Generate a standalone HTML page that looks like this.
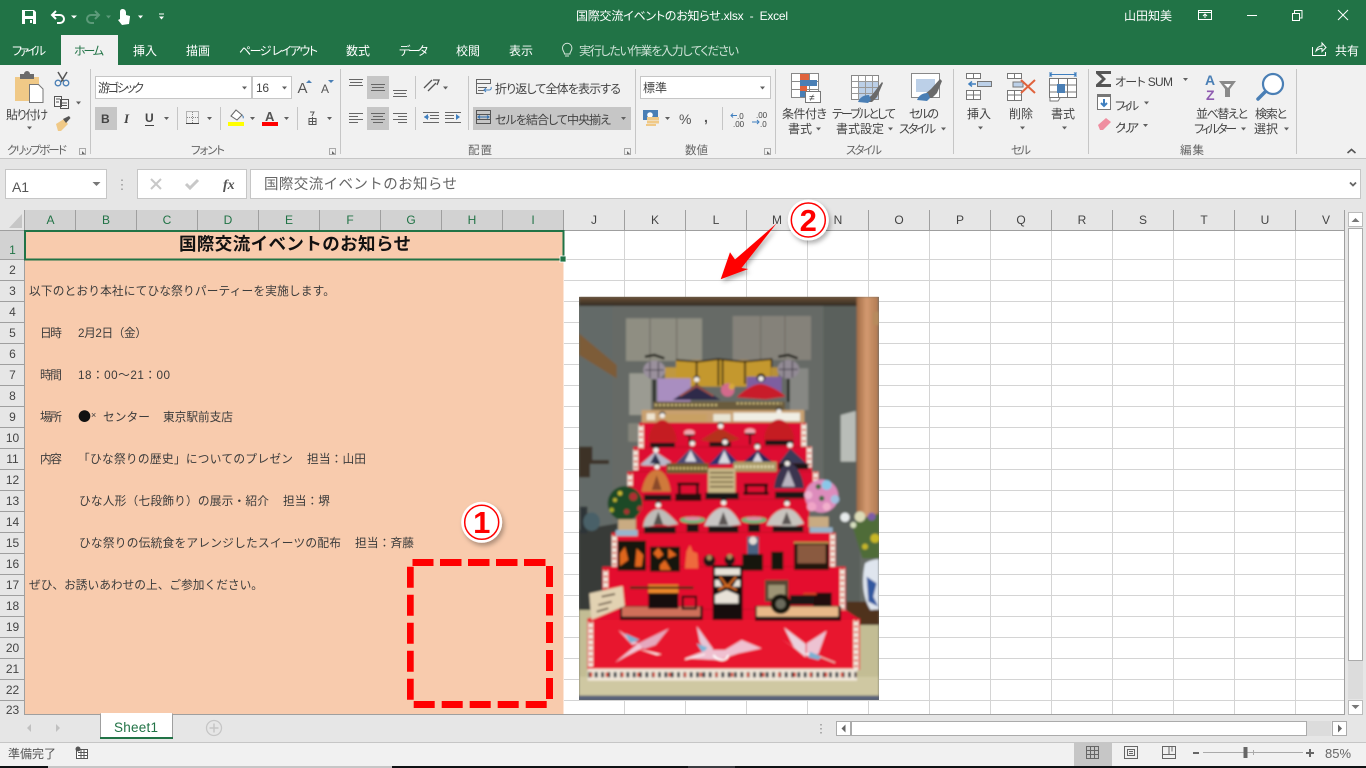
<!DOCTYPE html>
<html lang="ja"><head><meta charset="utf-8"><title>国際交流イベントのお知らせ.xlsx - Excel</title>
<style>
html,body{margin:0;padding:0;width:1366px;height:768px;overflow:hidden;background:#e6e6e6}
svg{display:block;position:absolute;left:0;top:0}
text{font-family:"Liberation Sans","Noto Sans CJK JP",sans-serif;white-space:pre}
.r{font-size:12px;fill:#444;font-feature-settings:"palt"}
.w{font-size:12px;fill:#fff;font-feature-settings:"palt"}
.l{font-size:11.5px;fill:#666;font-feature-settings:"palt"}
.c{font-size:11.7px;fill:#3c3c3c}
.h{font-size:12px;fill:#444;text-anchor:middle}
.g{fill:#217346;font-feature-settings:"palt"}
.tri{fill:#606060}
.sep{stroke:#c6c6c6;stroke-width:1}
</style></head><body>
<svg width="1366" height="768" viewBox="0 0 1366 768" xmlns="http://www.w3.org/2000/svg">
<defs>
<filter id="sh" x="-30%" y="-30%" width="170%" height="170%"><feDropShadow dx="2" dy="3" stdDeviation="2.5" flood-color="#000" flood-opacity=".3"/></filter>
<filter id="bl" x="-5%" y="-5%" width="110%" height="110%"><feGaussianBlur stdDeviation="3.2"/></filter>
<clipPath id="pc"><rect x="27" y="20" width="900" height="1210"/></clipPath>
<linearGradient id="wood" x1="0" x2="1" y1="0" y2="0"><stop offset="0" stop-color="#a06a44"/><stop offset=".45" stop-color="#d39a70"/><stop offset="1" stop-color="#b27a52"/></linearGradient>
<linearGradient id="ceil" x1="0" x2="0" y1="0" y2="1"><stop offset="0" stop-color="#6e5238"/><stop offset="1" stop-color="#2f2a22"/></linearGradient>
<g id="hd"><circle r="8" cy="2" fill="#f3eee8"/><path d="M-10 0a10 10 0 0 1 20 0l-2 1a8 6 0 0 0-16 0z" fill="#111"/></g>
</defs>

<!-- title bar -->
<rect width="1366" height="65" fill="#217346"/>
<path d="M22 10h12l2 2v12H22z" fill="#fff"/><path d="M25 11h8v5h-8z" fill="#217346"/><path d="M25 19h8v5h-8z" fill="#217346"/><path d="M30 20h2v3h-2z" fill="#fff"/>
<path d="M56 11l-4 4 4 4M52 15h8a4 4 0 0 1 0 8h-3" fill="none" stroke="#fff" stroke-width="2"/>
<path d="M71 15.500h6l-3 3z" fill="#fff"/>
<path d="M95 11l4 4-4 4M99 15h-8a4 4 0 0 0 0 8h3" fill="none" stroke="#5c9a79" stroke-width="2"/>
<path d="M106 15.500h5l-2.500 3z" fill="#5c9a79"/>
<path d="M122 9a3.500 3.500 0 0 1 4 3v3l4 1v1l-1 7-7 1-4-5 2-1V12a3 3 0 0 1 2-3z" fill="#fff"/>
<path d="M138 15.500h5l-2.500 3z" fill="#fff"/>
<path d="M159 13.500h5v1h-5zM159 16.500h5l-2.500 3z" fill="#fff"/>
<text class="w" x="576" y="20" textLength="212">国際交流イベントのお知らせ.xlsx  -  Excel</text>
<text class="w" x="1124" y="20" textLength="48">山田知美</text>
<path d="M1198.500 10.500h13v9h-13zM1198.500 12.500h13M1205 18v-4M1203 16l2-2 2 2" fill="none" stroke="#fff"/>
<path d="M1247 15.500h10" stroke="#fff"/>
<path d="M1292.500 13.500h7v7h-7zM1294.500 13v-2.500h7.500v7.500h-2.500" fill="none" stroke="#fff"/>
<path d="M1338 10l10 10M1348 10l-10 10" stroke="#fff" fill="none"/>
<rect x="61" y="35" width="57" height="30" fill="#f1f1f1"/>
<text class="w" x="12" y="55" textLength="34">ファイル</text>
<text class="g" font-size="12" x="74" y="55" textLength="30">ホーム</text>
<text class="w" x="133" y="55" textLength="24">挿入</text>
<text class="w" x="186" y="55" textLength="24">描画</text>
<text class="w" x="239" y="55" textLength="79">ページ レイアウト</text>
<text class="w" x="346" y="55" textLength="24">数式</text>
<text class="w" x="399" y="55" textLength="29">データ</text>
<text class="w" x="456" y="55" textLength="24">校閲</text>
<text class="w" x="509" y="55" textLength="24">表示</text>
<path d="M564.500 54c0-2-2-3-2-6a4.700 4.700 0 0 1 9.400 0c0 3-2 4-2 6zM565 56h4" fill="none" stroke="#d5e5db"/>
<text x="579" y="55" font-size="12" fill="#cfe2d7" style="font-feature-settings:'palt'" textLength="160">実行したい作業を入力してください</text>
<path d="M1312.500 47v8.500h13V52M1316 51c1-4 4-5 6-5v-3l4 4.500-4 4v-3c-2 0-4 .5-6 2.500z" fill="none" stroke="#fff"/>
<text class="w" x="1335" y="55" textLength="24">共有</text>

<!-- ribbon -->
<rect y="65" width="1366" height="93" fill="#f1f1f1"/>
<rect y="158" width="1366" height="1" fill="#c6c6c6"/>
<g class="sep">
<path d="M90.500 69v85M340.500 69v85M635.500 69v85M775.500 69v85M953.500 69v85M1088.500 69v85M1296.500 69v85M177.500 107v23M220.500 107v23M297.500 107v23M415.500 76v23M415.500 107v23M468.500 76v54M722.500 107v23"/>
</g>

<!-- clipboard -->
<path d="M15 77h24v24H15z" fill="#f0c987"/><path d="M20 74h4a3 3 0 0 1 6 0h4v5H20z" fill="#6b6b6b"/>
<path d="M29.500 84.500h9l4.500 4.500v13.500H29.500z" fill="#fff" stroke="#777"/>
<text class="r" x="6" y="119" textLength="42">貼り付け</text>
<path class="tri" d="M27 126.500h5l-2.500 3z"/>
<path d="M58 72l6 10M67 72l-6 10" stroke="#555" stroke-width="1.500" fill="none"/><circle cx="58" cy="83" r="2.800" fill="none" stroke="#4a7fb5" stroke-width="1.300"/><circle cx="66" cy="83" r="2.800" fill="none" stroke="#4a7fb5" stroke-width="1.300"/>
<path d="M54.500 96.500h7v10h-7zM60.500 99.500h8v9h-8zM56 99h4M56 102h3M62 103h5M62 105.500h5" fill="#f8f8f8" stroke="#555"/>
<path class="tri" d="M76 101.500h5l-2.500 3z"/>
<path d="M56 124l8-5 4 5-7 7-3 0z" fill="#f0c987"/><path d="M63 119l6-3 1.500 2-4.500 5z" fill="#555"/>
<text class="l" x="7" y="154" textLength="60">クリップボード</text>
<path d="M79.500 148.500h6v6h-6z" fill="none" stroke="#aaa"/><path d="M82 151l3 3h-3z" fill="#666"/>

<!-- font -->
<rect x="95.500" y="76.500" width="156" height="22" fill="#fff" stroke="#c6c6c6"/>
<rect x="252.500" y="76.500" width="39" height="22" fill="#fff" stroke="#c6c6c6"/>
<text class="r" x="98" y="92" textLength="46">游ゴシック</text>
<path class="tri" d="M242 86.500h5l-2.500 3z"/>
<text class="r" x="256" y="92" textLength="13">16</text>
<path class="tri" d="M282 86.500h5l-2.500 3z"/>
<text x="297.500" y="93" font-size="15" fill="#555">A</text><path d="M306 83h6l-3-3z" fill="#4a7fb5"/>
<text x="321" y="93" font-size="12" fill="#555">A</text><path d="M328 80h6l-3 3z" fill="#4a7fb5"/>
<rect x="95" y="107" width="22" height="23" fill="#c6c6c6"/>
<text x="101" y="123" font-size="12" font-weight="bold" fill="#444">B</text>
<text x="124" y="123" font-size="13" font-style="italic" style="font-family:'Liberation Serif',serif" font-weight="bold" fill="#444">I</text>
<text x="145" y="122" font-size="12" font-weight="bold" fill="#444">U</text><path d="M145 125.500h9" stroke="#444"/>
<path class="tri" d="M164 117h5l-2.500 3z"/>
<path d="M186.500 111.500h12v12h-12z" fill="none" stroke="#777" stroke-dasharray="1 1"/><path d="M186 123.500h13" stroke="#444"/><path d="M192.500 112v11M187 117.500h11" stroke="#888" stroke-dasharray="1 1"/>
<path class="tri" d="M207 117h5l-2.500 3z"/>
<path d="M231 116l5-6 6 5-5 5z" fill="#fff" stroke="#666"/><path d="M242 114l2 3-1 2z" fill="#4a7fb5"/><rect x="228" y="122" width="16" height="4" fill="#ff0"/>
<path class="tri" d="M250 117h5l-2.500 3z"/>
<text x="265" y="121" font-size="13" font-weight="bold" fill="#555">A</text><rect x="262" y="122" width="16" height="4" fill="#f00"/>
<path class="tri" d="M284 117h5l-2.500 3z"/>
<path d="M310 112h4l-2 4M309 118.500h7v6h-7zM312.500 117v8M309 121.500h7" fill="none" stroke="#555"/>
<path class="tri" d="M327 117h5l-2.500 3z"/>
<text class="l" x="191" y="154" textLength="34">フォント</text>
<path d="M329.500 148.500h6v6h-6z" fill="none" stroke="#aaa"/><path d="M332 151l3 3h-3z" fill="#666"/>

<!-- alignment -->
<rect x="367" y="76" width="22" height="23" fill="#c6c6c6"/><rect x="367" y="107" width="22" height="23" fill="#c6c6c6"/>
<path d="M349 79.500h14M350 82.500h12M349 85.500h14M371 84.500h14M372 87.500h12M371 90.500h14M393 90.500h14M394 93.500h12M393 96.500h14" stroke="#666" fill="none"/>
<path d="M349 113.500h14M349 116.500h9M349 119.500h14M349 122.500h9M371 113.500h14M373 116.500h10M371 119.500h14M373 122.500h10M393 113.500h14M398 116.500h9M393 119.500h14M398 122.500h9" stroke="#666" fill="none"/>
<path d="M424 88l8-8M428 91l8-8M433 80l6 0-2 5" stroke="#555" fill="none" stroke-width="1.300"/>
<path class="tri" d="M443 86.500h5l-2.500 3z"/>
<path d="M423 112.500h16M430 115.500h9M430 118.500h9M423 122.500h16" stroke="#666"/><path d="M428 114l-4 3 4 3z" fill="#3f7fbf"/><path d="M424 117h5" stroke="#3f7fbf"/>
<path d="M445 112.500h16M445 115.500h9M445 118.500h9M445 122.500h16" stroke="#666" /><path d="M456 114l4 3-4 3z" fill="#3f7fbf"/>
<path d="M476.500 79.500h14v4h-14zM478 87.500h9M478 90.500h6M476.500 84v9.500h7" fill="none" stroke="#666"/><path d="M486 92l-2-2 2-2M484 90h5a2 2 0 0 0 2-3" fill="none" stroke="#3f7fbf"/>
<text class="r" x="495" y="93" textLength="126">折り返して全体を表示する</text>
<rect x="473" y="107" width="158" height="23" fill="#c6c6c6"/>
<path d="M476.500 110.500h14v13h-14zM476.500 114.500h14M476.500 119.500h14" fill="none" stroke="#555"/><path d="M479 117h9M480 115.500l-2 1.500 2 1.500M487 115.500l2 1.500-2 1.500" fill="none" stroke="#2f6fb0"/>
<text class="r" x="495" y="124" textLength="116">セルを結合して中央揃え</text>
<path class="tri" d="M621 117h5l-2.500 3z"/>
<text class="l" x="468" y="154" textLength="24">配置</text>
<path d="M624.500 148.500h6v6h-6z" fill="none" stroke="#aaa"/><path d="M627 151l3 3h-3z" fill="#666"/>

<!-- number -->
<rect x="640.500" y="76.500" width="130" height="22" fill="#fff" stroke="#c6c6c6"/>
<text class="r" x="643" y="92" textLength="24">標準</text>
<path class="tri" d="M760 86.500h5l-2.500 3z"/>
<rect x="643" y="110" width="15" height="10" fill="#4a7fb5"/><circle cx="650" cy="115" r="2.800" fill="#fff"/>
<rect x="647" y="117" width="12" height="3" fill="#f0c987"/><rect x="647" y="120.500" width="12" height="3" fill="#f0c987"/><rect x="646" y="124" width="10" height="2" fill="#f0c987"/>
<path class="tri" d="M665 117h5l-2.500 3z"/>
<text x="679" y="124" font-size="14" fill="#555">%</text>
<text x="704" y="122" font-size="14" font-weight="bold" fill="#555">,</text>
<text x="737" y="119" font-size="8" fill="#444">.0</text><text x="733" y="127" font-size="8" fill="#444">.00</text><path d="M731 115.500h6M733 113.500l-2 2 2 2" stroke="#3f7fbf" fill="none"/>
<text x="756" y="118" font-size="8" fill="#444">.00</text><text x="760" y="127" font-size="8" fill="#444">.0</text><path d="M752 122h7M757 120l2 2-2 2" stroke="#3f7fbf" fill="none"/>
<text class="l" x="685" y="154" textLength="23">数値</text>
<path d="M764.500 148.500h6v6h-6z" fill="none" stroke="#aaa"/><path d="M767 151l3 3h-3z" fill="#666"/>

<!-- styles -->
<path d="M791.500 73.500h27v24h-27zM791.500 81.500h27M791.500 89.500h27M800.500 73.500v24M809.500 73.500v24" fill="#fff" stroke="#888"/>
<rect x="800" y="74" width="9" height="7" fill="#e0633d"/><rect x="800" y="80" width="17" height="6" fill="#4a7fb5"/><rect x="800" y="86" width="7" height="5" fill="#e0633d"/><rect x="800" y="91" width="5" height="6" fill="#4a7fb5"/>
<rect x="805.500" y="91.500" width="15" height="11" fill="#fff" stroke="#777"/><text x="809" y="101" font-size="10" fill="#444">≠</text>
<text class="r" x="782" y="118" textLength="45">条件付き</text>
<text class="r" x="788" y="133" textLength="24">書式</text><path class="tri" d="M816 127.500h5l-2.500 3z"/>
<path d="M851.500 75.500h27v24h-27z" fill="#fff" stroke="#888"/><rect x="859" y="81" width="19" height="18" fill="#bcd0e8"/>
<path d="M851.500 81.500h27M851.500 87.500h27M851.500 93.500h27M858.500 75.500v24M865.500 75.500v24M872.500 75.500v24" stroke="#999" fill="none"/>
<path d="M866 100l6-5 10-13 1 1-6 14-5 5h-7z" fill="#6a6a6a"/><path d="M858 102c2-5 6-7 11-7l2 5-3 3z" fill="#4a7fb5"/>
<text class="r" x="832" y="118" textLength="64">テーブルとして</text>
<text class="r" x="836" y="133" textLength="48">書式設定</text><path class="tri" d="M888 127.500h5l-2.500 3z"/>
<path d="M911.500 73.500h28v24h-28z" fill="#fff" stroke="#888"/><rect x="916" y="79" width="19" height="13" fill="#bcd0e8"/>
<path d="M925 94l6-5 9-10 2 2-5 12-5 5h-7z" fill="#6a6a6a"/><path d="M917 100c2-5 6-7 11-7l2 5-3 3z" fill="#4a7fb5"/>
<text class="r" x="909" y="118" textLength="30">セルの</text>
<text class="r" x="899" y="133" textLength="37">スタイル</text><path class="tri" d="M941 127.500h5l-2.500 3z"/>
<text class="l" x="846" y="154" textLength="36">スタイル</text>

<!-- cells -->
<path d="M966.500 73.500h14v5h-14zM973.500 73.500v5M966.500 90.500h14v9h-14zM966.500 95h14M973.500 90.500v9M977.500 81.500h14v5h-14zM984.500 81.500v5" fill="#fff" stroke="#777"/>
<rect x="978" y="82" width="13" height="4" fill="#bcd0e8"/><path d="M970 84h6M972 81.500l-3 2.500 3 2.500" stroke="#3f7fbf" fill="none" stroke-width="1.500"/>
<text class="r" x="967" y="118" textLength="24">挿入</text><path class="tri" d="M978 126.500h5l-2.500 3z"/>
<path d="M1007.500 73.500h14v5h-14zM1014.500 73.500v5M1007.500 90.500h14v10h-14zM1007.500 95h14M1014.500 90.500v10" fill="#fff" stroke="#777"/>
<rect x="1013" y="82" width="10" height="5" fill="#bcd0e8" stroke="#777"/><path d="M1021 80l14 13M1035 80l-14 13" stroke="#e0633d" stroke-width="2"/>
<text class="r" x="1009" y="118" textLength="24">削除</text><path class="tri" d="M1020 126.500h5l-2.500 3z"/>
<path d="M1049.500 78.500h27v19h-27zM1049.500 85h27M1049.500 92h27M1058.500 78.500v19M1067.500 78.500v19M1050 97v4h8l2-3" fill="#fff" stroke="#777"/><rect x="1057" y="84" width="8" height="9" fill="#4a7fb5"/>
<path d="M1050 74.500h26M1050 72v5M1076 72v5M1052 72.500l-2 2 2 2M1074 72.500l2 2-2 2" fill="none" stroke="#3f7fbf"/>
<text class="r" x="1051" y="118" textLength="24">書式</text><path class="tri" d="M1062 126.500h5l-2.500 3z"/>
<text class="l" x="1011" y="154" textLength="20">セル</text>

<!-- edit -->
<path d="M1096 71h15v3h-10l5 5-5 5h10v3h-15v-2.500l6-5.500-6-5.500z" fill="#555"/>
<text class="r" x="1115" y="86" textLength="58">オート SUM</text><path class="tri" d="M1183 78h5l-2.500 3z"/>
<rect x="1097.500" y="94.500" width="13" height="15" fill="#fff" stroke="#777"/><rect x="1097" y="94" width="14" height="3" fill="#777"/><path d="M1104 99v7M1101 103l3 3 3-3" stroke="#3f7fbf" stroke-width="2" fill="none"/>
<text class="r" x="1115" y="110" textLength="24">フィル</text><path class="tri" d="M1144 101.500h5l-2.500 3z"/>
<path d="M1098 125l8-7 5 4-8 8h-3z" fill="#ef8ea0"/>
<text class="r" x="1115" y="132" textLength="24">クリア</text><path class="tri" d="M1143 124h5l-2.500 3z"/>
<text x="1205" y="85" font-size="14" font-weight="bold" fill="#4a7fb5">A</text><text x="1206" y="100" font-size="14" font-weight="bold" fill="#8e5bb0">Z</text>
<path d="M1219 81h17l-6 8v8h-5v-8z" fill="#8a8a8a"/><path d="M1224 84h7l-3 4z" fill="#fff"/>
<text class="r" x="1196" y="118" textLength="52">並べ替えと</text>
<text class="r" x="1194" y="133" textLength="43">フィルター</text><path class="tri" d="M1241 127.500h5l-2.500 3z"/>
<circle cx="1273" cy="84" r="10" fill="#fff" stroke="#4a7fb5" stroke-width="2.200"/><path d="M1265 92l-7 7" stroke="#4a7fb5" stroke-width="3.500" stroke-linecap="round"/>
<text class="r" x="1255" y="118" textLength="32">検索と</text>
<text class="r" x="1254" y="133" textLength="24">選択</text><path class="tri" d="M1284 127.500h5l-2.500 3z"/>
<text class="l" x="1180" y="154" textLength="24">編集</text>
<path d="M1347.500 153l4-3.500 4 3.500" fill="none" stroke="#555" stroke-width="1.600"/>

<!-- formula bar -->
<rect x="5.500" y="169.500" width="101" height="29" fill="#fff" stroke="#c6c6c6"/>
<text x="12" y="192" font-size="14" fill="#555" textLength="17">A1</text>
<path d="M92.500 182h8l-4 4z" fill="#777"/>
<path d="M122 179.500v1.500M122 184v1.500M122 188.500v1.500" stroke="#999" stroke-width="1.500"/>
<rect x="137.500" y="169.500" width="109" height="29" fill="#fff" stroke="#c6c6c6"/>
<path d="M151 179l10 10M161 179l-10 10" stroke="#c8c8c8" stroke-width="2"/>
<path d="M186 184l4 4 8-8" stroke="#c8c8c8" stroke-width="3" fill="none"/>
<text x="223" y="189" font-size="14" style="font-family:'Liberation Serif',serif" font-style="italic" font-weight="bold" fill="#555">fx</text>
<rect x="250.500" y="169.500" width="1110" height="29" fill="#fff" stroke="#c6c6c6"/>
<text x="264" y="189" font-size="14.500" fill="#666" textLength="193">国際交流イベントのお知らせ</text>
<path d="M1350 182.500l3 3 3-3" fill="none" stroke="#666" stroke-width="1.800"/>

<!-- sheet -->
<rect x="0" y="210" width="1366" height="505" fill="#e6e6e6"/>
<rect x="25" y="231" width="1320" height="484" fill="#fff"/>
<path stroke="#d4d4d4" fill="none" d="M624.500 231v483M685.500 231v483M746.500 231v483M807.500 231v483M868.500 231v483M929.500 231v483M990.500 231v483M1051.500 231v483M1112.500 231v483M1173.500 231v483M1234.500 231v483M1295.500 231v483
M564 259.500h780M564 280.500h780M564 301.500h780M564 322.500h780M564 343.500h780M564 364.500h780M564 385.500h780M564 406.500h780M564 427.500h780M564 448.500h780M564 469.500h780M564 490.500h780M564 511.500h780M564 532.500h780M564 553.500h780M564 574.500h780M564 595.500h780M564 616.500h780M564 637.500h780M564 658.500h780M564 679.500h780M564 700.500h780"/>
<rect x="25" y="231" width="538.500" height="484" fill="#f8cbad"/>

<!-- headers -->
<rect x="25" y="210" width="539" height="20" fill="#d2d2d2"/>
<rect x="0" y="231" width="24" height="29" fill="#d2d2d2"/>
<path d="M22 214v14H9z" fill="#c6c6c6"/>
<path stroke="#9f9f9f" fill="none" d="M0 230.500h1345M24.500 210v505M75.500 210v20M136.500 210v20M197.500 210v20M258.500 210v20M319.500 210v20M380.500 210v20M441.500 210v20M502.500 210v20M563.500 210v20M624.500 210v20M685.500 210v20M746.500 210v20M807.500 210v20M868.500 210v20M929.500 210v20M990.500 210v20M1051.500 210v20M1112.500 210v20M1173.500 210v20M1234.500 210v20M1295.500 210v20M1344.500 210v505
M0 259.500h24M0 280.500h24M0 301.500h24M0 322.500h24M0 343.500h24M0 364.500h24M0 385.500h24M0 406.500h24M0 427.500h24M0 448.500h24M0 469.500h24M0 490.500h24M0 511.500h24M0 532.500h24M0 553.500h24M0 574.500h24M0 595.500h24M0 616.500h24M0 637.500h24M0 658.500h24M0 679.500h24M0 700.500h24"/>
<g>
<text class="h" style="fill:#217346" x="50.500" y="224">A</text><text class="h" style="fill:#217346" x="106" y="224">B</text><text class="h" style="fill:#217346" x="167" y="224">C</text><text class="h" style="fill:#217346" x="228" y="224">D</text><text class="h" style="fill:#217346" x="289" y="224">E</text><text class="h" style="fill:#217346" x="350" y="224">F</text><text class="h" style="fill:#217346" x="411" y="224">G</text><text class="h" style="fill:#217346" x="472" y="224">H</text><text class="h" style="fill:#217346" x="533" y="224">I</text>
<text class="h" x="594" y="224">J</text><text class="h" x="655" y="224">K</text><text class="h" x="716" y="224">L</text><text class="h" x="777" y="224">M</text><text class="h" x="838" y="224">N</text><text class="h" x="899" y="224">O</text><text class="h" x="960" y="224">P</text><text class="h" x="1021" y="224">Q</text><text class="h" x="1082" y="224">R</text><text class="h" x="1143" y="224">S</text><text class="h" x="1204" y="224">T</text><text class="h" x="1265" y="224">U</text><text class="h" x="1326" y="224">V</text>
<text class="h" style="fill:#217346" x="12.500" y="254">1</text>
<text class="h" x="12.500" y="274">2</text><text class="h" x="12.500" y="295">3</text><text class="h" x="12.500" y="316">4</text><text class="h" x="12.500" y="337">5</text><text class="h" x="12.500" y="358">6</text><text class="h" x="12.500" y="379">7</text><text class="h" x="12.500" y="400">8</text><text class="h" x="12.500" y="421">9</text><text class="h" x="12.500" y="442">10</text><text class="h" x="12.500" y="463">11</text><text class="h" x="12.500" y="484">12</text><text class="h" x="12.500" y="505">13</text><text class="h" x="12.500" y="526">14</text><text class="h" x="12.500" y="547">15</text><text class="h" x="12.500" y="568">16</text><text class="h" x="12.500" y="589">17</text><text class="h" x="12.500" y="610">18</text><text class="h" x="12.500" y="631">19</text><text class="h" x="12.500" y="652">20</text><text class="h" x="12.500" y="673">21</text><text class="h" x="12.500" y="694">22</text><text class="h" x="12.500" y="714">23</text>
</g>

<!-- selection -->
<rect x="25" y="231" width="538" height="28" fill="#f8cbad" stroke="#fff" stroke-width="1"/>
<rect x="25" y="231" width="538.500" height="28.500" fill="none" stroke="#217346" stroke-width="2"/>
<rect x="560" y="256" width="6" height="6" fill="#217346" stroke="#fff" stroke-width=".8"/>

<!-- cell text -->
<text x="179" y="250" font-size="17.500" font-weight="bold" fill="#111" textLength="232">国際交流イベントのお知らせ</text>
<text class="c" x="29" y="295" textLength="306">以下のとおり本社にてひな祭りパーティーを実施します。</text>
<text class="c" x="40" y="337" textLength="22">日時</text><text class="c" x="78" y="337" textLength="69">2月2日（金）</text>
<text class="c" x="40" y="379" textLength="22">時間</text><text class="c" x="78" y="379" textLength="92">18：00～21：00</text>
<text class="c" x="40" y="421" textLength="22">場所</text><text x="78" y="421" font-size="13" fill="#111" style="font-family:'Noto Sans CJK JP',sans-serif">●</text><text x="91" y="418" font-size="9" fill="#3c3c3c">×</text><text class="c" x="103" y="421" textLength="47">センター</text><text class="c" x="163" y="421" textLength="70">東京駅前支店</text>
<text class="c" x="40" y="463" textLength="22">内容</text><text class="c" x="78" y="463" textLength="215">「ひな祭りの歴史」についてのプレゼン</text><text class="c" x="307" y="463" textLength="59">担当：山田</text>
<text class="c" x="79" y="505" textLength="190">ひな人形（七段飾り）の展示・紹介</text><text class="c" x="283" y="505" textLength="47">担当：堺</text>
<text class="c" x="79" y="547" textLength="262">ひな祭りの伝統食をアレンジしたスイーツの配布</text><text class="c" x="355" y="547" textLength="59">担当：斉藤</text>
<text class="c" x="29" y="589" textLength="234">ぜひ、お誘いあわせの上、ご参加ください。</text>

<!-- photo -->
<rect x="579" y="297" width="300" height="403" fill="#6a6e68"/>
<g transform="translate(570 290) scale(.33333)" clip-path="url(#pc)">
<g filter="url(#bl)">
<rect x="27" y="20" width="900" height="1210" fill="#666b66"/>
<rect x="27" y="20" width="100" height="700" fill="#646b68"/>
<rect x="760" y="20" width="110" height="950" fill="#5a605b"/>
<rect x="27" y="20" width="840" height="28" fill="url(#ceil)"/>
<path d="M27 130l113 95v40L27 195z" fill="#7d5c38"/>
<rect x="168" y="85" width="228" height="128" fill="#8f8e82"/><rect x="488" y="78" width="235" height="132" fill="#85827a"/>
<path d="M240 85v125M320 85v125M572 78v130M645 78v130" stroke="#6a685e" stroke-width="3"/>
<rect x="178" y="250" width="65" height="125" fill="#9b9b92"/><rect x="660" y="235" width="55" height="125" fill="#878884"/>
<rect x="175" y="400" width="40" height="55" fill="#84847a"/>
<path d="M812 375l45-12v152h-45z" fill="#b9bdb8"/>
<rect x="860" y="20" width="65" height="660" fill="url(#wood)"/><rect x="908" y="65" width="19" height="40" fill="#b78a5c"/>
<path d="M27 470h40l0 40h50v12H60v40H27z" fill="#3e3328"/>
<path d="M27 720l115-20v270H27z" fill="#383a38"/>
<rect x="30" y="650" width="22" height="80" fill="#2f3638"/><ellipse cx="65" cy="695" rx="25" ry="28" fill="#4a6068"/>
<rect x="27" y="960" width="900" height="260" fill="#c3bd94"/>
<rect x="27" y="1160" width="900" height="55" fill="#cfc8a2"/>
<rect x="27" y="1217" width="900" height="13" fill="#56617a"/>
<path d="M830 935h97v70h-97z" fill="#50311f"/>
<path d="M885 820c25-15 42-12 42-12v150l-25 2c-20-30-30-80-17-140z" fill="#dfe5ee"/>
<path d="M890 860l30 20-10 40 15 30-30-15z" fill="#30589f"/>
<path d="M845 700l82-30v135h-50z" fill="#4f6c38"/>
<circle cx="825" cy="682" r="14" fill="#e8ecec"/><circle cx="870" cy="680" r="16" fill="#dcdcb8"/><circle cx="905" cy="680" r="12" fill="#7d5ca6"/><circle cx="915" cy="745" r="14" fill="#c8b725"/><circle cx="885" cy="770" r="9" fill="#c4b52c"/><circle cx="850" cy="705" r="9" fill="#d8e0c0"/>

<!-- dais -->
<rect x="318" y="210" width="285" height="80" fill="#c4982f"/>
<path d="M318 210l65 5 62-8 75 8 85-8v85M380 215v70M445 207v80M458 207v80M525 212v70" stroke="#2a2010" stroke-width="5" fill="none"/>
<rect x="285" y="232" width="33" height="35" fill="#c09840"/>
<rect x="603" y="232" width="22" height="35" fill="#b89038"/>
<ellipse cx="253" cy="240" rx="33" ry="28" fill="#9a909c"/><path d="M225 240h56M240 215v50M265 215v50" stroke="#3b3640" stroke-width="3"/><path d="M225 200l28-5 30 10M253 268v70" stroke="#15130f" stroke-width="7" fill="none"/>
<ellipse cx="655" cy="238" rx="33" ry="28" fill="#928a94"/><path d="M627 238h56M642 213v50M667 213v50" stroke="#3b3640" stroke-width="3"/><path d="M625 200l30-5 28 10M655 266v70" stroke="#15130f" stroke-width="7" fill="none"/>
<rect x="262" y="265" width="100" height="80" fill="#a98ec0"/><rect x="530" y="260" width="105" height="50" fill="#7d5fa0"/>
<path d="M308 330l72-48 72 48z" fill="#2e2c4a"/><path d="M330 318l50-30 50 30" stroke="#b05540" stroke-width="4" fill="none"/>
<use href="#hd" x="380" y="266"/>
<path d="M500 322c30-30 60-42 75-40s50 15 72 38l-60 8z" fill="#c81e2a"/>
<circle cx="573" cy="263" r="13" fill="#111"/><circle cx="573" cy="266" r="8" fill="#f3eee8"/>
<circle cx="473" cy="300" r="20" fill="#d36a8c"/><circle cx="485" cy="290" r="9" fill="#d7a83a"/>
<rect x="250" y="335" width="395" height="26" fill="#6b5c3c"/><path d="M255 345h190M500 340h135" stroke="#d9c680" stroke-width="6" stroke-dasharray="6 6"/>
<rect x="215" y="360" width="488" height="38" fill="#c8a070"/>
<rect x="490" y="368" width="200" height="25" fill="#f0eee4"/><rect x="430" y="372" width="52" height="22" fill="#e8e4d4"/><rect x="285" y="372" width="125" height="22" fill="#c8a064"/><rect x="230" y="370" width="25" height="20" fill="#eee4d0"/>

<!-- tiers -->
<rect x="208" y="398" width="500" height="74" fill="#de1030"/>
<rect x="190" y="470" width="536" height="76" fill="#de1030"/>
<rect x="172" y="545" width="574" height="86" fill="#de1030"/>
<rect x="198" y="628" width="520" height="102" fill="#e0102e"/>
<rect x="125" y="728" width="672" height="104" fill="#e4112e"/>
<rect x="97" y="830" width="730" height="132" fill="#e4112e"/>
<rect x="52" y="985" width="818" height="155" fill="#e8132e"/>
<path d="M97 960h730l45 30H50z" fill="#e4112e"/>
<path d="M208 471h500M190 545h536M172 628h574M198 727h520M125 830h672M97 958h730" stroke="#8a0d1c" stroke-width="2" opacity=".55"/>
<path d="M213 405v70M702 400v70M197 478v62M718 470v62M180 552v36M737 545v30M133 735v95M788 730v100M107 840v55M817 835v125M62 995v135M858 990v150" stroke="#f3e8dc" stroke-width="15"/>
<path d="M213 405v70M702 400v70M197 478v62M718 470v62M180 552v36M737 545v30M133 735v95M788 730v100M107 840v55M817 835v125M62 995v135M858 990v150" stroke="#d94a3a" stroke-width="10" stroke-dasharray="5 12"/>
<rect x="53" y="1136" width="808" height="36" fill="#f0e6d8"/>
<path d="M55 1154h805" stroke="#23303e" stroke-width="16" stroke-dasharray="9 10"/>
<path d="M60 1154h800" stroke="#dc4a30" stroke-width="14" stroke-dasharray="7 40"/>

<!-- tier 1 -->
<path d="M235 455c0-30 20-65 42-65s42 35 44 65z" fill="#c51a22"/><use href="#hd" x="277" y="374"/><rect x="240" y="458" width="75" height="14" fill="#1a1614"/>
<path d="M393 450l57-35 58 32-30 8h-60z" fill="#b5331f"/><use href="#hd" x="452" y="406"/><rect x="418" y="456" width="65" height="14" fill="#1a1614"/>
<path d="M583 448c0-30 20-60 43-60s45 30 47 60z" fill="#c51a22"/><use href="#hd" x="627" y="362"/><rect x="585" y="450" width="85" height="16" fill="#1a1614"/>
<ellipse cx="358" cy="428" rx="16" ry="9" fill="#f0a8b0"/><path d="M345 436h28M358 436v30" stroke="#111" stroke-width="5"/>
<ellipse cx="540" cy="424" rx="16" ry="9" fill="#f0a8b0"/><path d="M525 432h30M540 432v32" stroke="#111" stroke-width="5"/>
<!-- tier 2 -->
<path d="M210 525l46-40 48 32-20 10h-60z" fill="#b8b8c8"/><path d="M240 520l16-30 16 30z" fill="#2f3050"/><use href="#hd" x="258" y="478"/>
<path d="M318 520l44-45 44 45z" fill="#4a4a72"/><path d="M345 515l17-35 17 35z" fill="#d8d8e0"/><use href="#hd" x="367" y="458"/>
<path d="M416 525l47-50 44 45z" fill="#2c3270"/><path d="M445 520l18-40 18 40z" fill="#d8d8e0"/><use href="#hd" x="465" y="454"/>
<path d="M518 518l45-38 46 38z" fill="#23265c"/><path d="M548 515l15-28 15 28z" fill="#d8d8e0"/><use href="#hd" x="562" y="468"/>
<path d="M626 520l35-45 48 45z" fill="#3a3a58"/><use href="#hd" x="660" y="463"/><rect x="625" y="520" width="90" height="18" fill="#1a1614"/>
<rect x="290" y="520" width="125" height="30" fill="#6c5a30"/><path d="M295 535h115" stroke="#d7c078" stroke-width="8" stroke-dasharray="6 5"/>
<rect x="490" y="515" width="130" height="30" fill="#a99a66"/><path d="M495 530h120" stroke="#ece2b8" stroke-width="8" stroke-dasharray="6 5"/>
<!-- tier 3 -->
<path d="M215 605c5-30 20-65 45-65s38 35 42 65z" fill="#cf7a3a"/><path d="M245 600l15-45 15 45z" fill="#8a4a2a"/><use href="#hd" x="261" y="528"/><rect x="222" y="614" width="82" height="18" fill="#1a1614"/>
<path d="M612 595c3-35 20-70 43-75s45 40 47 75z" fill="#3a3450"/><path d="M635 590l20-50 20 50z" fill="#b8b4c0"/><use href="#hd" x="652" y="518"/><rect x="615" y="605" width="88" height="20" fill="#1a1614"/>
<rect x="414" y="535" width="82" height="75" fill="#c9b888"/><path d="M420 548h70M420 562h70M420 576h70M420 590h70" stroke="#5b4a28" stroke-width="4"/><rect x="406" y="608" width="100" height="20" fill="#141414"/>
<path d="M322 582h66M328 582v30M382 582v30M320 615h70v14h-70z" stroke="#15100e" stroke-width="8" fill="#15100e" opacity=".9"/>
<path d="M522 585h72M528 585v30M588 585v30M520 610h76" stroke="#15100e" stroke-width="8" fill="none"/>
<!-- plants -->
<circle cx="165" cy="640" r="52" fill="#1d4a25"/><circle cx="190" cy="620" r="12" fill="#b02f30"/><circle cx="125" cy="660" r="7" fill="#a7a828"/><circle cx="210" cy="655" r="8" fill="#c02f35"/><circle cx="150" cy="610" r="7" fill="#c8b830"/><circle cx="170" cy="665" r="8" fill="#a83030"/><circle cx="135" cy="630" r="6" fill="#b8b030"/>
<rect x="145" y="688" width="52" height="35" fill="#c9ab82"/><rect x="137" y="720" width="66" height="18" fill="#98b4cc"/>
<circle cx="755" cy="618" r="50" fill="#dd8cbc"/><circle cx="770" cy="585" r="15" fill="#8ac7e8"/><circle cx="725" cy="650" r="14" fill="#f0a4c6"/><circle cx="795" cy="628" r="13" fill="#a3c0e0"/><circle cx="745" cy="590" r="8" fill="#3d6a40"/><circle cx="770" cy="650" r="12" fill="#f2b0cc"/><circle cx="715" cy="615" r="12" fill="#f0b4d0"/><circle cx="755" cy="625" r="8" fill="#3d6a40"/>
<rect x="716" y="680" width="60" height="32" fill="#c9ab82"/><rect x="720" y="712" width="68" height="16" fill="#98b4cc"/>
<!-- tier 4 -->
<path d="M220 712c0-30 25-55 45-55s45 30 60 45l-30 5-20-5z" fill="#bebcb8"/><path d="M250 705l15-40 15 40z" fill="#55514e"/><use href="#hd" x="265" y="643"/><rect x="222" y="710" width="95" height="20" fill="#1a1614"/>
<path d="M403 708c10-30 35-55 57-55s42 30 52 50l-30 5z" fill="#c8c6c4"/><path d="M445 705l15-40 15 40z" fill="#5a5552"/><use href="#hd" x="461" y="636"/><rect x="415" y="708" width="90" height="20" fill="#1a1614"/>
<path d="M590 706c10-30 35-50 60-50s40 25 52 45l-30 8z" fill="#c8c4be"/><path d="M635 703l15-38 15 38z" fill="#5a5552"/><use href="#hd" x="651" y="638"/><rect x="608" y="708" width="92" height="18" fill="#1a1614"/>
<ellipse cx="368" cy="690" rx="38" ry="10" fill="#6cba7a"/><ellipse cx="368" cy="686" rx="25" ry="5" fill="#e08aa8"/><rect x="350" y="702" width="36" height="24" fill="#1a1614"/>
<ellipse cx="552" cy="690" rx="38" ry="10" fill="#6cba7a"/><ellipse cx="552" cy="686" rx="25" ry="5" fill="#e08aa8"/><rect x="534" y="702" width="36" height="24" fill="#1a1614"/>
<!-- tier 5 -->
<rect x="143" y="752" width="85" height="90" fill="#181410"/><path d="M150 790l15-20 10 40-25 18zM200 775l20 20-5 35-20 0z" fill="#e0661c"/>
<rect x="240" y="770" width="90" height="75" fill="#181410"/><path d="M250 790l15-18 15 22-15 12zM295 775l25 20-25 10zM270 825l15-15 18 30h-33z" fill="#e0661c"/>
<path d="M345 835l5-50 10-20 8 20 14 5 3 45z" fill="#ee6a3c"/>
<circle cx="418" cy="812" r="18" fill="#1a1512"/><circle cx="418" cy="803" r="8" fill="#a88a5a"/>
<circle cx="479" cy="810" r="16" fill="#1a1512"/><circle cx="479" cy="800" r="8" fill="#a88a5a"/>
<rect x="517" y="792" width="62" height="50" fill="#181410"/><rect x="532" y="740" width="34" height="52" fill="#486482"/><circle cx="549" cy="752" r="12" fill="#e5ddd5"/>
<rect x="604" y="785" width="36" height="55" fill="#181410"/>
<rect x="672" y="755" width="105" height="85" fill="#20140f"/><rect x="682" y="765" width="85" height="55" fill="#8a5a40"/><path d="M672 758h105" stroke="#c79a52" stroke-width="5"/>
<!-- tier 6 -->
<rect x="150" y="948" width="248" height="42" fill="#14100e"/><rect x="156" y="950" width="235" height="30" fill="#cf6f5a"/>
<rect x="235" y="884" width="90" height="72" fill="#14100e"/><path d="M235 884h90v25h-90z" fill="#f08a2a"/><path d="M180 893h190" stroke="#3a2a18" stroke-width="7"/><rect x="338" y="920" width="40" height="36" fill="none" stroke="#14100e" stroke-width="6"/>
<rect x="428" y="825" width="90" height="165" fill="#14100e"/><path d="M435 835h75v20h-75zM435 870h12l10 20h-22zM500 870h10v20h-22zM435 915l35-15 35 15v25h-70z" fill="#e8e2d8"/><path d="M450 860l22 30 26-30M445 900l25-15 30 15" stroke="#d76a20" stroke-width="6" fill="none"/>
<rect x="555" y="948" width="258" height="44" fill="#14100e"/><rect x="560" y="950" width="245" height="30" fill="#e8b888"/>
<rect x="585" y="870" width="70" height="65" fill="#564a35"/><rect x="595" y="885" width="50" height="40" fill="#9d9474"/><circle cx="632" cy="942" r="30" fill="#14130f"/><circle cx="632" cy="942" r="15" fill="#6b6a5c"/>
<rect x="660" y="915" width="105" height="30" fill="#1c1412"/><path d="M735 908h50v40h-55z" fill="#23110e"/><path d="M700 912h40" stroke="#d14020" stroke-width="6"/>
<path d="M58 910l100-22 6 60-100 42z" fill="#e2d2b2"/><path d="M95 920l40-8M85 945l40-10M80 965l35-10" stroke="#5a4838" stroke-width="5"/>
<!-- cranes -->
<path d="M135 1118l70-58 20 10-55 28z" fill="#f1c8d8"/><path d="M205 1060l92-45-40 50-35 12z" fill="#e5a8be"/><path d="M145 1020l60 40-18 5z" fill="#e8c0d0"/><path d="M165 1030l45 20-30 8z" fill="#7ab0d2"/><path d="M200 1075l75 18-15 2z" fill="#fff"/>
<path d="M380 1008l50 70-20 10-20-30z" fill="#e6c6d6"/><path d="M380 1060l32 12-12 20z" fill="#7ab8d8"/><path d="M345 1105l65-25 55 0 50-30 60 25-70 15-60 20z" fill="#efc0d0"/><path d="M430 1095c15 20 40 20 45 0" stroke="#fff" stroke-width="6" fill="none"/><path d="M345 1108l60-15" stroke="#fff" stroke-width="3"/>
<path d="M642 1012l65 50 0 40-35-30z" fill="#ead0dc"/><path d="M710 1060l60-38-25 70-35 8z" fill="#edc2d2"/><path d="M630 1045l70 45 30 0-20 5z" fill="#fff"/><path d="M720 1085l35 15-10 10-30-8z" fill="#7ab0d2"/><path d="M750 1100l45 18" stroke="#e6dcd6" stroke-width="3"/>
</g>
</g>

<!-- annotations -->
<g fill="#f00">
<path d="M412.500 559h21v7h-21zM440 559h21.500v7H440zM468 559h21.500v7H468zM496 559h21.500v7H496zM524 559h21.500v7H524z"/>
<path d="M546 566h7v21h-7zM546 594h7v21.500h-7zM546 622h7v21h-7zM546 650h7v21h-7zM546 678h7v21h-7z"/>
<path d="M413.700 701h21v7h-21zM441.700 701h21v7h-21zM469.700 701h21v7h-21zM497.700 701h21v7h-21zM525.700 701h21v7h-21z"/>
<path d="M407 566.700h6.700v21H407zM407 594.700h6.700v21H407zM407 622.700h6.700v21H407zM407 650.700h6.700v21H407zM407 678.700h6.700v21H407z"/>
</g>
<g filter="url(#sh)"><circle cx="481.700" cy="522.300" r="20.500" fill="#fff"/></g>
<circle cx="481.700" cy="522.300" r="17" fill="#fff" stroke="#f00" stroke-width="1.500"/>
<text x="481.700" y="533" text-anchor="middle" font-size="31" font-weight="bold" fill="#f00" stroke="#fff" stroke-width="2" paint-order="stroke">1</text>
<path filter="url(#sh)" d="M720.700 279.300L730 252.300 735 259.500 776.700 223.300 741.500 268 748.300 269z" fill="#f00"/>
<g filter="url(#sh)"><circle cx="808.300" cy="220" r="20.500" fill="#fff"/></g>
<circle cx="808.300" cy="220" r="17" fill="#fff" stroke="#f00" stroke-width="1.500"/>
<text x="808.300" y="231" text-anchor="middle" font-size="31" font-weight="bold" fill="#f00" stroke="#fff" stroke-width="2" paint-order="stroke">2</text>

<!-- vertical scrollbar -->
<rect x="1345" y="210" width="21" height="505" fill="#e6e6e6"/>
<rect x="1348.500" y="212.500" width="14" height="14" fill="#fff" stroke="#bbb"/><path d="M1351.500 222h8l-4-4z" fill="#777"/>
<rect x="1348.500" y="228.500" width="14" height="432" fill="#fff" stroke="#ababab"/>
<rect x="1348" y="661" width="15" height="38" fill="#dcdcdc"/>
<rect x="1348.500" y="700.500" width="14" height="14" fill="#fff" stroke="#bbb"/><path d="M1351.500 705h8l-4 4z" fill="#777"/>
<rect x="25" y="714" width="1320" height="1" fill="#9f9f9f"/>

<!-- tabs -->
<rect y="715" width="1366" height="27" fill="#e6e6e6"/>
<path d="M31 724v8l-4-4zM56 724v8l4-4z" fill="#c0c0c0"/>
<rect x="100.500" y="714" width="72" height="24" fill="#fff" stroke="#9f9f9f"/><rect x="101" y="713" width="71" height="3" fill="#fff"/>
<rect x="100" y="737" width="73" height="2" fill="#217346"/>
<text x="114" y="732" font-size="13.500" fill="#217346" textLength="44">Sheet1</text>
<circle cx="214" cy="728" r="7.500" fill="none" stroke="#c6c6c6" stroke-width="1.300"/><path d="M209.500 728h9M214 723.500v9" stroke="#c6c6c6" stroke-width="1.500"/>
<path d="M821 724v1.500M821 728v1.500M821 732v1.500" stroke="#999" stroke-width="1.500"/>
<rect x="836.500" y="721.500" width="14" height="14" fill="#fff" stroke="#ababab"/><path d="M845.500 724.500v8l-4-4z" fill="#666"/>
<rect x="851.500" y="721.500" width="455" height="14" fill="#fff" stroke="#ababab"/>
<rect x="1307" y="721" width="24" height="15" fill="#dcdcdc"/>
<rect x="1332.500" y="721.500" width="14" height="14" fill="#fff" stroke="#ababab"/><path d="M1338 724.500v8l4-4z" fill="#666"/>

<!-- status bar -->
<rect y="742" width="1366" height="24" fill="#f1f1f1"/><rect y="742" width="1366" height="1" fill="#c6c6c6"/>
<rect x="1074" y="743" width="38" height="23" fill="#c6c6c6"/>
<text x="8" y="758" font-size="12" fill="#555" textLength="48">準備完了</text>
<rect x="76.500" y="749.500" width="11" height="9" fill="#fff" stroke="#555"/><circle cx="78" cy="749" r="2.500" fill="#555"/><path d="M78 752.500h9M78 755.500h9M81 750v8M84 750v8" stroke="#555"/>
<path d="M1086.500 746.500h12v12h-12zM1086.500 750.500h12M1086.500 754.500h12M1090.500 746.500v12M1094.500 746.500v12" fill="none" stroke="#666"/>
<path d="M1124.500 746.500h13v12h-13zM1127.500 749.500h7v6h-7zM1129 751.500h4M1129 753.500h4" fill="none" stroke="#666"/>
<path d="M1162.500 746.500h13v12h-13zM1162.500 754.500h13M1169 746.500v8M1172 746.500v5" fill="none" stroke="#666"/>
<path d="M1193 753h6" stroke="#666" stroke-width="2"/><path d="M1203 752.500h100" stroke="#aaa"/><path d="M1253.500 750v5" stroke="#aaa"/><rect x="1243.500" y="747" width="4" height="11" fill="#666"/><path d="M1306 753h8M1310 749v8" stroke="#666" stroke-width="2"/>
<text x="1325" y="758" font-size="13" fill="#666" textLength="26">85%</text>

<rect y="766" width="1366" height="2" fill="#0f1214"/><rect x="48" y="766" width="344" height="2" fill="#c6c6c6"/><rect x="688" y="766" width="47" height="2" fill="#3a3c40"/>
</svg>
</body></html>
